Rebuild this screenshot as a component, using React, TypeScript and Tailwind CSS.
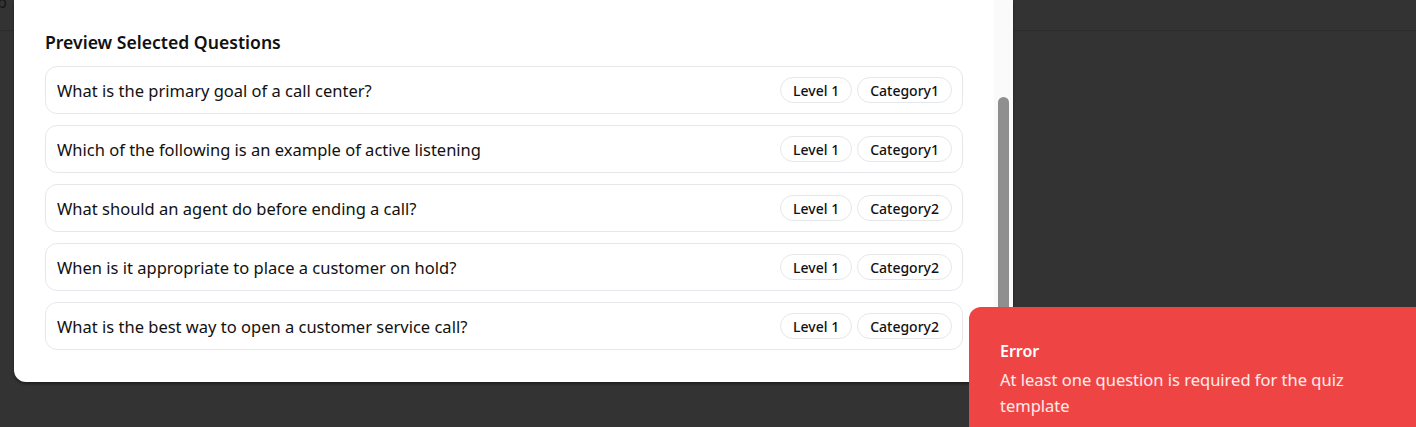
import React from 'react';

interface Question {
  text: string;
  level: string;
  category: string;
}

const questions: Question[] = [
  { text: 'What is the primary goal of a call center?', level: 'Level 1', category: 'Category1' },
  { text: 'Which of the following is an example of active listening', level: 'Level 1', category: 'Category1' },
  { text: 'What should an agent do before ending a call?', level: 'Level 1', category: 'Category2' },
  { text: 'When is it appropriate to place a customer on hold?', level: 'Level 1', category: 'Category2' },
  { text: 'What is the best way to open a customer service call?', level: 'Level 1', category: 'Category2' },
];

const Badge: React.FC<{ label: string }> = ({ label }) => (
  <span className="inline-flex h-[26px] items-center rounded-full border border-gray-200 px-3 text-[14px] font-medium text-[#111]">
    {label}
  </span>
);

export default function App() {
  return (
    <div
      className="relative h-[427px] w-[1416px] overflow-hidden bg-[#333333]"
      style={{ fontFamily: '"Noto Sans", "Open Sans", sans-serif' }}
    >
      {/* page behind the overlay */}
      <div className="relative h-[31px] border-b border-[#2c2c2c]">
        <span className="absolute -left-[3px] -top-[6px] text-[16px] leading-none text-[#161616]">p</span>
      </div>

      {/* modal */}
      <div className="absolute left-[14px] top-0 flex h-[382px] w-[999px] overflow-hidden rounded-b-xl bg-white shadow-[0_2px_3px_rgba(0,0,0,0.4)]">
        <div className="flex-1 pl-[31px] pr-[31px] pt-[31px]">
          <h2 className="mb-[13px] text-[17.6px] font-semibold leading-[22px] text-[#111]">
            Preview Selected Questions
          </h2>
          <div className="flex flex-col gap-[11px]">
            {questions.map((q) => (
              <div
                key={q.text}
                className="flex h-[48px] items-center justify-between rounded-xl border border-gray-200 pl-[11px] pr-[10px]"
              >
                <span className="pt-[2px] text-[16.5px] text-[#111]">{q.text}</span>
                <div className="flex items-center gap-[5px]">
                  <Badge label={q.level} />
                  <Badge label={q.category} />
                </div>
              </div>
            ))}
          </div>
        </div>
        {/* scrollbar */}
        <div className="w-[19px] bg-[#fafafa] pl-[4px] pt-[97px]">
          <div className="h-[270px] w-[11px] rounded-t-full bg-[#8f8f8f]" />
        </div>
      </div>

      {/* toast */}
      <div className="absolute left-[969px] top-[307px] h-[140px] w-[470px] rounded-tl-xl bg-[#ef4444] pl-[31px] pt-[33px] text-white">
        <div className="text-[16px] font-semibold leading-[22px]">Error</div>
        <p className="mt-[5px] w-[370px] text-[16.5px] leading-[26px] text-white/90">
          At least one question is required for the quiz template
        </p>
      </div>
    </div>
  );
}
